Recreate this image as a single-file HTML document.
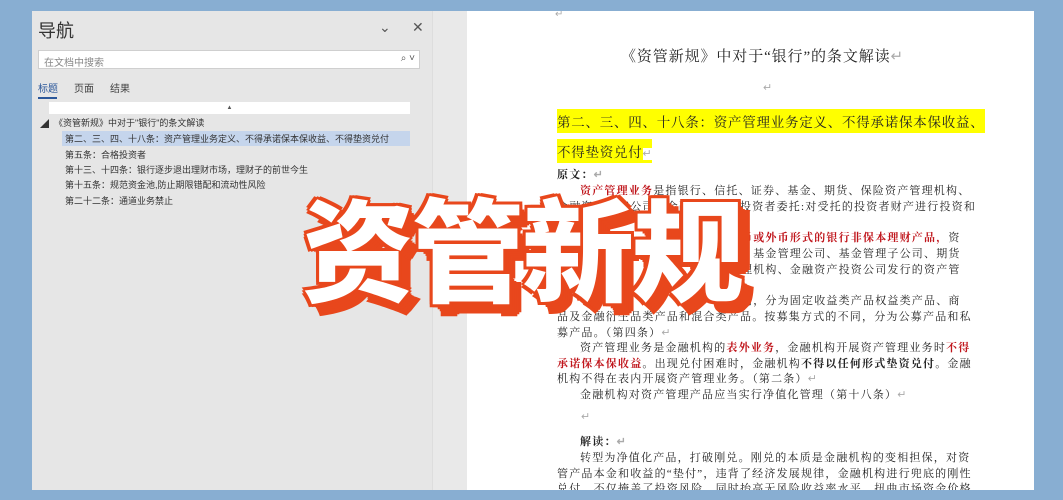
<!DOCTYPE html>
<html><head><meta charset="utf-8"><style>
*{margin:0;padding:0;box-sizing:border-box}
body{width:1063px;height:500px;background:#88aed2;position:relative;overflow:hidden;font-family:"Liberation Sans","Noto Sans CJK SC",sans-serif}
.nav{position:absolute;left:32px;top:11px;width:400px;height:479px;background:#e6e6e6}
.gap{position:absolute;left:432px;top:11px;width:35px;height:479px;background:#e9e9e9;border-left:1px solid #ddd}
.page{position:absolute;left:467px;top:11px;width:567px;height:479px;background:#fff;overflow:hidden}
.a{position:absolute;white-space:nowrap}
.s{font-family:"Liberation Serif","Noto Serif CJK SC",serif;font-size:11px;color:#222;letter-spacing:1.2px}
.r{color:#c0161c;font-weight:bold}
.b{font-weight:bold}
.m{color:#aaa}
.hl{background:#ffff00;font-size:13.5px;letter-spacing:0.75px;padding:2px 0}
.n{font-size:9px;color:#333}
.big{position:absolute;left:302px;top:164px;font-family:"Noto Sans CJK SC",sans-serif;font-weight:900;font-size:112px;color:#fff;letter-spacing:-2px;
text-shadow:
3px 0 0 #e8471c,-3px 0 0 #e8471c,0 3px 0 #e8471c,0 -3px 0 #e8471c,3px 3px 0 #e8471c,-3px -3px 0 #e8471c,3px -3px 0 #e8471c,-3px 3px 0 #e8471c,
5px 5px 0 #e8471c,7px 7px 0 #e8471c,9px 9px 0 #e8471c,10px 10px 0 #e8471c,12px 8px 0 #e8471c,8px 12px 0 #e8471c}
</style></head><body>
<div class="nav">
<div class="a" style="left:6px;top:6px;font-size:18px;color:#333">导航</div>
<div class="a" style="left:347px;top:8px;font-size:14px;color:#555">&#8964;</div>
<div class="a" style="left:380px;top:8px;font-size:14px;color:#555">✕</div>
<div class="a" style="left:6px;top:39px;width:382px;height:19px;background:#fff;border:1px solid #cfcfcf;font-size:10px;color:#888;padding:3px 5px">在文档中搜索<span style="position:absolute;right:4px;top:2px;color:#555">⌕ ˅</span></div>
<div class="a" style="left:6px;top:69px;font-size:10px;color:#2b579a">标题</div>
<div class="a" style="left:6px;top:86px;width:19px;height:2px;background:#2b579a"></div>
<div class="a" style="left:42px;top:69px;font-size:10px;color:#444">页面</div>
<div class="a" style="left:78px;top:69px;font-size:10px;color:#444">结果</div>
<div class="a" style="left:17px;top:91px;width:361px;height:12px;background:#fff;font-size:6px;text-align:center;color:#555;line-height:12px">▲</div>
<div class="a n" style="left:8px;top:106px">◢</div>
<div class="a n" style="left:22px;top:105px">《资管新规》中对于"银行"的条文解读</div>
<div class="a" style="left:30px;top:120px;width:348px;height:15px;background:#c5d5ec"></div>
<div class="a n" style="left:33px;top:121px">第二、三、四、十八条：资产管理业务定义、不得承诺保本保收益、不得垫资兑付</div>
<div class="a n" style="left:33px;top:137px">第五条：合格投资者</div>
<div class="a n" style="left:33px;top:152px">第十三、十四条：银行逐步退出理财市场，理财子的前世今生</div>
<div class="a n" style="left:33px;top:167px">第十五条：规范资金池,防止期限错配和流动性风险</div>
<div class="a n" style="left:33px;top:183px">第二十二条：通道业务禁止</div>
</div>
<div class="gap"></div>
<div class="page">
<div class="a m" style="left:88px;top:-2px;font-size:10px">↵</div>
<div class="a s" style="left:154px;top:34px;font-size:15px;letter-spacing:0.9px">《资管新规》中对于“银行”的条文解读<span class="m">↵</span></div>
<div class="a m" style="left:296px;top:70px;font-size:11px">↵</div>
<div class="a s hl" style="left:90px;top:98px">第二、三、四、十八条：资产管理业务定义、不得承诺保本保收益、</div>
<div class="a s hl" style="left:90px;top:128px">不得垫资兑付<span class="m" style="background:#fff;font-size:11px">↵</span></div>
<div class="a s b" style="left:90px;top:155px">原文：<span class="m">↵</span></div>
<div class="a s" style="left:113px;top:171px"><span class="r">资产管理业务</span>是指银行、信托、证券、基金、期货、保险资产管理机构、</div>
<div class="a s" style="left:90px;top:187px">金融资产投资公司等金融机构接受投资者委托:对受托的投资者财产进行投资和</div>
<div class="a s" style="left:274px;top:218px"><span class="r">币或外币形式的银行非保本理财产品，</span>资</div>
<div class="a s" style="left:274px;top:234px">、基金管理公司、基金管理子公司、期货</div>
<div class="a s" style="left:274px;top:250px">理机构、金融资产投资公司发行的资产管</div>
<div class="a s" style="left:274px;top:281px">同，分为固定收益类产品权益类产品、商</div>
<div class="a s" style="left:90px;top:297px">品及金融衍生品类产品和混合类产品。按募集方式的不同，分为公募产品和私</div>
<div class="a s" style="left:90px;top:313px">募产品。（第四条）<span class="m">↵</span></div>
<div class="a s" style="left:113px;top:328px">资产管理业务是金融机构的<span class="r">表外业务</span>，金融机构开展资产管理业务时<span class="r">不得</span></div>
<div class="a s" style="left:90px;top:344px"><span class="r">承诺保本保收益</span>。出现兑付困难时，金融机构<span class="b">不得以任何形式垫资兑付</span>。金融</div>
<div class="a s" style="left:90px;top:359px">机构不得在表内开展资产管理业务。（第二条）<span class="m">↵</span></div>
<div class="a s" style="left:113px;top:375px">金融机构对资产管理产品应当实行净值化管理（第十八条）<span class="m">↵</span></div>
<div class="a m" style="left:114px;top:399px;font-size:11px">↵</div>
<div class="a s b" style="left:113px;top:422px">解读：<span class="m">↵</span></div>
<div class="a s" style="left:113px;top:438px">转型为净值化产品，打破刚兑。刚兑的本质是金融机构的变相担保，对资</div>
<div class="a s" style="left:90px;top:454px">管产品本金和收益的“垫付”，违背了经济发展规律，金融机构进行兜底的刚性</div>
<div class="a s" style="left:90px;top:469px">兑付，不仅掩盖了投资风险，同时抬高无风险收益率水平，扭曲市场资金价格，</div>
</div>
<div class="big">资管新规</div>
</body></html>
